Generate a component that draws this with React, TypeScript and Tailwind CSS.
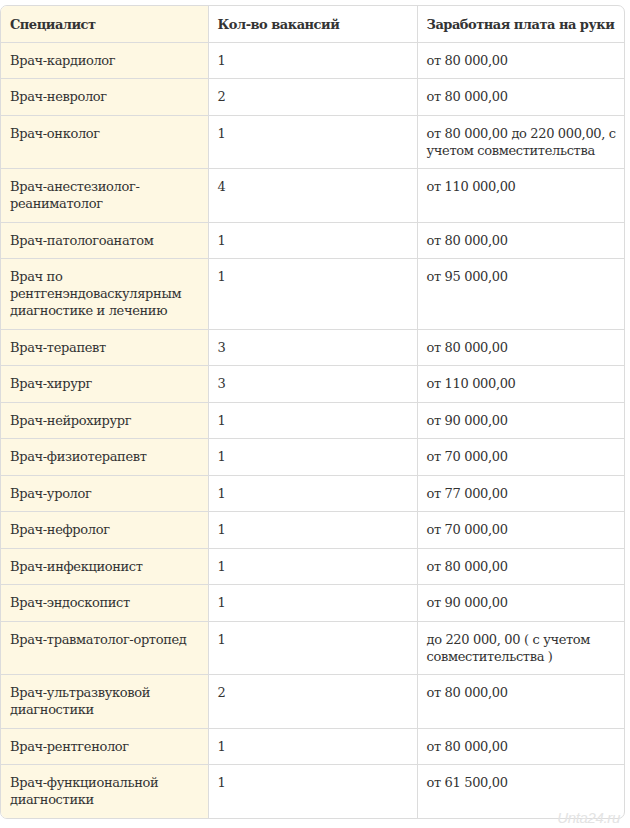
const rows: [string, string, string][] = [
  ['Врач-кардиолог', '1', 'от 80 000,00'],
  ['Врач-невролог', '2', 'от 80 000,00'],
  ['Врач-онколог', '1', 'от 80 000,00 до 220 000,00, с учетом совместительства'],
  ['Врач-анестезиолог-реаниматолог', '4', 'от 110 000,00'],
  ['Врач-патологоанатом', '1', 'от 80 000,00'],
  ['Врач по рентгенэндоваскулярным диагностике и лечению', '1', 'от 95 000,00'],
  ['Врач-терапевт', '3', 'от 80 000,00'],
  ['Врач-хирург', '3', 'от 110 000,00'],
  ['Врач-нейрохирург', '1', 'от 90 000,00'],
  ['Врач-физиотерапевт', '1', 'от 70 000,00'],
  ['Врач-уролог', '1', 'от 77 000,00'],
  ['Врач-нефролог', '1', 'от 70 000,00'],
  ['Врач-инфекционист', '1', 'от 80 000,00'],
  ['Врач-эндоскопист', '1', 'от 90 000,00'],
  ['Врач-травматолог-ортопед', '1', 'до 220 000, 00 ( с учетом совместительства )'],
  ['Врач-ультразвуковой диагностики', '2', 'от 80 000,00'],
  ['Врач-рентгенолог', '1', 'от 80 000,00'],
  ['Врач-функциональной диагностики', '1', 'от 61 500,00'],
]

export default function App() {
  return (
    <div className="relative bg-white pt-[5px] w-[630px] h-[828px] text-[#333] text-[13px] leading-[17px] tracking-[-0.35px]" style={{ fontFamily: '"DejaVu Serif", serif' }}>
      <div className="w-[625px] border border-[#dcdcdc] rounded-[7px] overflow-hidden">
        <table className="w-full table-fixed border-collapse">
          <colgroup>
            <col className="w-[207px]" />
            <col className="w-[209px]" />
            <col />
          </colgroup>
          <thead>
            <tr className="tracking-[-0.5px]">
              <th className="bg-[#fef8e3] text-left font-bold pl-[9px] pr-[6px] pt-[9.5px] pb-[9px] border-r border-[#dcdcdc]">Специалист</th>
              <th className="text-left font-bold pl-[9px] pr-[6px] pt-[9.5px] pb-[9px] border-r border-[#dcdcdc]">Кол-во вакансий</th>
              <th className="text-left font-bold pl-[9px] pr-[4px] pt-[9.5px] pb-[9px] whitespace-nowrap">Заработная плата на руки</th>
            </tr>
          </thead>
          <tbody>
            {rows.map(([name, count, pay]) => (
              <tr key={name} className="border-t border-[#dcdcdc] align-top">
                <td className="bg-[#fef8e3] pl-[9px] pr-[6px] py-[9.25px] border-r border-[#dcdcdc]">{name}</td>
                <td className="pl-[9px] pr-[6px] py-[9.25px] border-r border-[#dcdcdc]">{count}</td>
                <td className="pl-[9px] pr-[6px] py-[9.25px]">{pay}</td>
              </tr>
            ))}
          </tbody>
        </table>
      </div>
      <span className="absolute right-[10px] bottom-[2px] text-[15px] italic text-[#e4e4e4]" style={{ fontFamily: '"Liberation Sans", sans-serif' }}>Unta24.ru</span>
    </div>
  )
}
